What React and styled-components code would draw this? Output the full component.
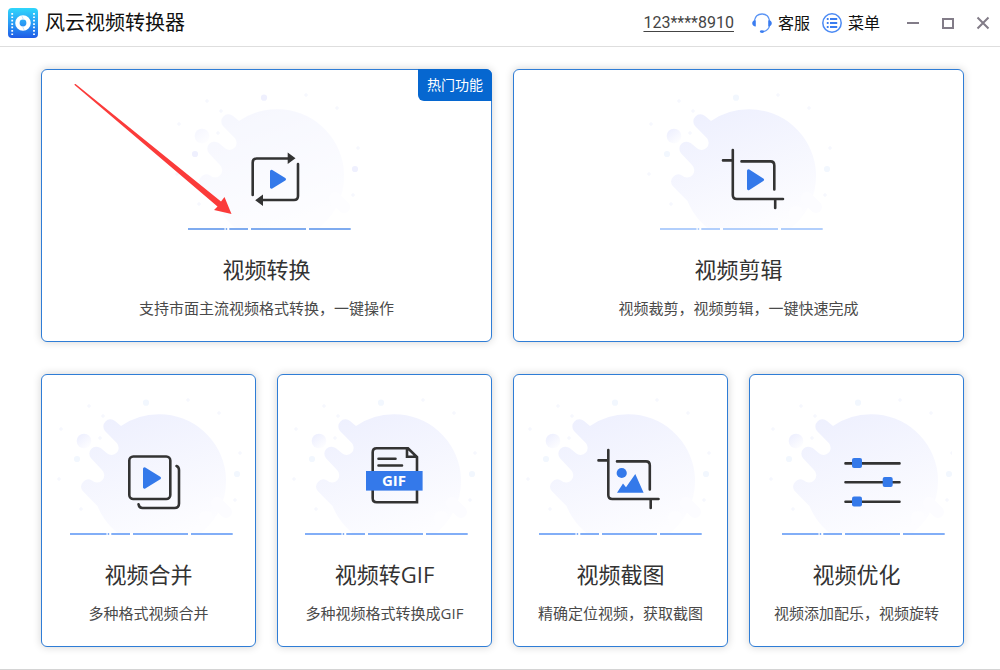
import React from "react";
import styled, { createGlobalStyle } from "styled-components";

const GlobalStyle = createGlobalStyle`
  * {
    box-sizing: border-box;
  }

  body {
    margin: 0;
    background-color: white;
    font-family: "Open Sans", "Noto Sans CJK SC", sans-serif;
    color: #333;
  }

  button {
    font-family: inherit;
    color: inherit;
  }
`;

const Window = styled.div`
  display: flex;
  flex-direction: column;
  min-height: 100vh;
  border-bottom: 1px solid #d4d4d4;
`;

const Header = styled.header`
  display: flex;
  align-items: center;
  justify-content: space-between;
  height: 47px;
  padding: 0 10px 0 8px;
  border-bottom: 1px solid #dedede;
`;

const Brand = styled.h1`
  display: flex;
  align-items: center;
  gap: 7px;
  margin: 0;
  font-size: 20px;
  font-weight: 400;
  line-height: 30px;
  color: #111;
`;

const Tools = styled.div`
  display: flex;
  align-items: center;
`;

const Account = styled.a`
  margin-right: 18px;
  font-family: Roboto, sans-serif;
  font-size: 16px;
  line-height: 20px;
  color: #444;
  text-underline-offset: 3px;
`;

const ToolButton = styled.button`
  display: flex;
  align-items: center;
  gap: 6px;
  margin-right: 12px;
  padding: 0;
  border: none;
  background: none;
  font-size: 16px;
  line-height: 24px;
  color: #111;
`;

const WindowButtons = styled.div`
  display: flex;
  gap: 21px;
  margin-left: 14px;
`;

const WindowButton = styled.button`
  display: flex;
  padding: 0;
  border: none;
  background: none;
  color: #827c88;
`;

const Cards = styled.main`
  display: grid;
  grid-template-columns: repeat(4, 1fr);
  gap: 32px 21px;
  padding: 22px 36px 22px 41px;
`;

const Card = styled.button`
  position: relative;
  grid-column: span ${({ $wide }) => ($wide ? 2 : 1)};
  display: flex;
  flex-direction: column;
  align-items: center;
  padding: 21px 0 23px;
  border: 1px solid #2f7dd6;
  border-radius: 6px;
  background-color: white;
  box-shadow: rgba(0, 0, 0, 0.18) 0 0 8px;
`;

const HotTag = styled.span`
  position: absolute;
  top: -1px;
  right: -1px;
  padding: 0 9px;
  border-radius: 0 6px 0 6px;
  font-size: 14px;
  line-height: 32px;
  color: white;
  background-color: #0667d0;
`;

const Pointer = styled.svg`
  position: absolute;
  top: 14px;
  left: 32px;
`;

const Title = styled.span`
  margin-top: 22px;
  font-size: 22px;
  line-height: 32px;
`;

const Description = styled.span`
  margin-top: 13px;
  font-size: 15px;
  line-height: 20px;
  color: #4a4a4a;
  white-space: nowrap;
`;

const BLUE = "#3479ea";
const DARK = "#333";

const STARS = [
  [19, 10],
  [33, 20],
  [-9, 33],
  [30, 42],
  [-11, 83],
  [11, 113],
  [118, 4],
  [149, 17],
  [170, 57],
  [165, 104],
];

const Illustration = ({ id, shift = 0, faint, line = "#82aef7", children }) => (
  <svg
    width="190"
    height="140"
    viewBox={`${-16 - shift} 0 190 140`}
    fill="none"
    aria-hidden="true"
  >
    <defs>
      <linearGradient
        id={`${id}-blob`}
        gradientUnits="userSpaceOnUse"
        x1="45"
        y1="20"
        x2="90"
        y2="145"
      >
        <stop offset="0" stopColor="#eef0fe" />
        <stop offset="1" stopColor="#fdfdff" />
      </linearGradient>
      <linearGradient id={`${id}-moon`} x1="0" y1="0" x2="0.8" y2="1">
        <stop offset="0" stopColor="#ebedfe" />
        <stop offset="1" stopColor="#fefeff" />
      </linearGradient>
      <clipPath id={`${id}-ground`}>
        <rect x="-20" y="0" width="200" height="137" />
      </clipPath>
    </defs>
    <g clipPath={`url(#${id}-ground)`} opacity={faint ? 0.5 : 1}>
      <g fill={`url(#${id}-blob)`}>
        <path d="M89.3 18.3A66.7 66.7 0 1 1 27.5 110L12.7 95A7.1 7.1 0 0 1 22 84.6A7.1 7.1 0 0 0 32 74L21 62.3A7.1 7.1 0 0 1 31 52.3L37 57.3A7.1 7.1 0 0 0 47 47.3L35 35A7.1 7.1 0 0 1 45 25L51 30A66.7 66.7 0 0 1 89.3 18.3Z" />
      </g>
      <path
        d="M147 107L156 116"
        stroke="#fcfcff"
        strokeWidth="12"
        strokeLinecap="round"
      />
      <circle cx="136" cy="122" r="7" fill="#fdfdff" />
      <circle cx="14" cy="45" r="7.3" fill={`url(#${id}-moon)`} />
    </g>
    <g fill={faint ? "#eff0fe" : "#f2f7fe"}>
      <circle cx="7" cy="63" r="3.1" />
      <circle cx="76" cy="6.7" r="3.1" />
      <circle cx="167" cy="78" r="3.1" />
    </g>
    {STARS.map(([x, y]) => (
      <path
        key={`${x}-${y}`}
        d={`M${x - 2} ${y}h4M${x} ${y - 2}v4`}
        stroke="#f3f5fd"
      />
    ))}
    <path
      d="M0 138H36.5M37.7 138H39.2M41.3 138H60M63 138H118M121 138H162.7"
      stroke={line}
      strokeWidth="2"
    />
    {children}
  </svg>
);

const Stroke = ({ d }) => (
  <path
    d={d}
    stroke={DARK}
    strokeWidth="2.6"
    strokeLinecap="round"
    strokeLinejoin="round"
  />
);

const Play = ({ x, y, width, height }) => (
  <path
    d={`M${x + 1.5} ${y + 1.8}L${x + width - 1.5} ${y + height / 2}L${x + 1.5} ${
      y + height - 1.8
    }Z`}
    fill={BLUE}
    stroke={BLUE}
    strokeWidth="3"
    strokeLinejoin="round"
  />
);

const ConvertIcon = () => (
  <>
    <Stroke d="M64.7 104V71.5Q64.7 67.5 68.7 67.5H100M110 73V105Q110 109 106 109H74" />
    <path d="M99.7 61.5L107.5 67.3L99.7 73ZM75 103.5L67.2 109.3L75 115Z" fill={DARK} />
    <Play x={82} y={78.5} width={16} height={19.5} />
  </>
);

const CropFrame = () => (
  <Stroke d="M69.3 54V99Q69.3 103 73.3 103H119.5M59.5 64.4H69M78 65.4H107Q110.8 65.4 110.8 69.4V93.5M111.7 103V112" />
);

const CutIcon = () => (
  <>
    <g transform="translate(3.5 5)">
      <CropFrame />
    </g>
    <Play x={87} y={78} width={17} height={21.5} />
  </>
);

const MergeIcon = () => (
  <>
    <rect
      x="59.3"
      y="60.5"
      width="41"
      height="42.5"
      rx="4"
      stroke={DARK}
      strokeWidth="2.6"
    />
    <Stroke d="M106.5 70Q109 71 109 74V107.5Q109 112 104.5 112H72.5Q69.2 112 68.5 108.2" />
    <Play x={73} y={71} width={18} height={22} />
  </>
);

const GifIcon = () => (
  <>
    <path
      d="M103 52.3H71.7Q67.7 52.3 67.7 56.3V102.3Q67.7 106.3 71.7 106.3H112V61L103 52.3H102V60.8H112"
      stroke={DARK}
      strokeWidth="2.6"
    />
    <Stroke d="M73.5 62.7H90.5M73.5 69.5H97" />
    <rect x="61" y="75" width="56.6" height="19.6" fill={BLUE} />
    <text
      x="89"
      y="90"
      textAnchor="middle"
      fontSize="15"
      fontWeight="700"
      fill="white"
    >
      GIF
    </text>
  </>
);

const ScreenshotIcon = () => (
  <>
    <CropFrame />
    <circle cx="82.7" cy="77" r="5.1" fill={BLUE} />
    <path d="M78 96.7L84 87.5L87 91.3L96.3 78L104.6 96.7Z" fill={BLUE} />
  </>
);

const SlidersIcon = () => (
  <>
    <Stroke d="M63.5 67.4H117.5M63.5 86.2H117.5M63.5 105.8H117.5" />
    <g fill={BLUE}>
      <rect x="70" y="62" width="10" height="10" rx="2" />
      <rect x="100.7" y="81" width="10" height="10" rx="2" />
      <rect x="70" y="100.5" width="10" height="10" rx="2" />
    </g>
  </>
);

const Logo = () => (
  <svg width="30" height="30" viewBox="0 0 30 30" aria-hidden="true">
    <defs>
      <linearGradient id="logo" x1="0" y1="0" x2="0" y2="1">
        <stop offset="0" stopColor="#2fd6fb" />
        <stop offset="0.5" stopColor="#2a9df5" />
        <stop offset="1" stopColor="#1f5be6" />
      </linearGradient>
    </defs>
    <rect width="30" height="30" rx="4" fill="url(#logo)" />
    <path
      d="M4.2 5V27M26 5V27"
      stroke="white"
      strokeWidth="1.8"
      strokeDasharray="1.7 1.7"
    />
    <circle cx="15" cy="15" r="5.6" fill="none" stroke="white" strokeWidth="4.4" />
    <path d="M14 8.2L15.4 11.4M16 21.8L14.6 18.6" stroke="#c6e2fc" strokeWidth="1" />
  </svg>
);

const HeadsetIcon = () => (
  <svg width="20" height="20" viewBox="0 0 20 20" fill="none" aria-hidden="true">
    <path
      d="M2.3 8C3 3.8 6 1 10 1S17 3.8 17.7 8M17.6 12.5C17 15.6 14.6 17.8 11.5 18.6"
      stroke="#5b95f5"
      strokeWidth="1.3"
    />
    <path
      d="M3.8 7.2V13.4C1.6 13.4 0.2 12.2 0.2 10.3S1.6 7.2 3.8 7.2ZM16.2 7.2V13.4C18.4 13.4 19.8 12.2 19.8 10.3S18.4 7.2 16.2 7.2Z"
      fill="#3b7df0"
    />
    <ellipse cx="10" cy="18.6" rx="2.2" ry="1.3" fill="#3b7df0" />
  </svg>
);

const ListIcon = () => (
  <svg width="20" height="20" viewBox="0 0 20 20" fill="none" aria-hidden="true">
    <circle cx="10" cy="10" r="9.2" stroke="#4b8af4" strokeWidth="1.5" />
    <path
      d="M4.8 6H6.6M8 6H15.2M4.8 10H6.6M8 10H15.2M4.8 14H6.6M8 14H15.2"
      stroke="#3b7df0"
      strokeWidth="1.8"
    />
  </svg>
);

const WindowIcon = ({ d }) => (
  <svg width="14" height="14" viewBox="0 0 14 14" fill="none" aria-hidden="true">
    <path d={d} stroke="currentColor" strokeWidth="2" />
  </svg>
);

const features = [
  {
    id: "convert",
    title: "视频转换",
    description: "支持市面主流视频格式转换，一键操作",
    icon: <ConvertIcon />,
    wide: true,
    hot: true,
    faint: true,
    line: "#7fabef",
  },
  {
    id: "cut",
    title: "视频剪辑",
    description: "视频裁剪，视频剪辑，一键快速完成",
    icon: <CutIcon />,
    wide: true,
    line: "#b2cffc",
  },
  {
    id: "merge",
    title: "视频合并",
    description: "多种格式视频合并",
    icon: <MergeIcon />,
  },
  {
    id: "gif",
    title: "视频转GIF",
    description: "多种视频格式转换成GIF",
    icon: <GifIcon />,
    shift: -1,
  },
  {
    id: "screenshot",
    title: "视频截图",
    description: "精确定位视频，获取截图",
    icon: <ScreenshotIcon />,
    shift: -3,
  },
  {
    id: "optimize",
    title: "视频优化",
    description: "视频添加配乐，视频旋转",
    icon: <SlidersIcon />,
    shift: 4,
  },
];

const App = () => {
  return (
    <Window>
      <GlobalStyle />
      <Header>
        <Brand>
          <Logo />
          风云视频转换器
        </Brand>
        <Tools>
          <Account href="#account">123****8910</Account>
          <ToolButton type="button">
            <HeadsetIcon />
            客服
          </ToolButton>
          <ToolButton type="button">
            <ListIcon />
            菜单
          </ToolButton>
          <WindowButtons>
            <WindowButton type="button" aria-label="最小化">
              <WindowIcon d="M1 7H13" />
            </WindowButton>
            <WindowButton type="button" aria-label="最大化">
              <WindowIcon d="M2 3H12V12H2Z" />
            </WindowButton>
            <WindowButton type="button" aria-label="关闭">
              <WindowIcon d="M1.5 1.5L12.5 12.5M12.5 1.5L1.5 12.5" />
            </WindowButton>
          </WindowButtons>
        </Tools>
      </Header>
      <Cards>
        {features.map(
          ({ id, title, description, icon, wide, hot, faint, line, shift }) => (
            <Card key={id} type="button" $wide={wide}>
              <Illustration id={id} faint={faint} line={line} shift={shift}>
                {icon}
              </Illustration>
              <Title>{title}</Title>
              <Description>{description}</Description>
              {hot && <HotTag>热门功能</HotTag>}
              {hot && (
                <Pointer width="158" height="132" aria-hidden="true">
                  <path
                    d="M0.6 0L1.6 0L147 117.5L150.5 113L157.5 130L140 126L143.5 122.5L0.6 1Z"
                    fill="#fb3b3a"
                  />
                </Pointer>
              )}
            </Card>
          )
        )}
      </Cards>
    </Window>
  );
};

export default App;
